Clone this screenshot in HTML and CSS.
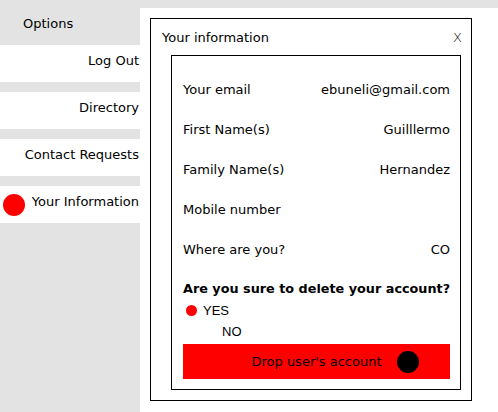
FILE: index.html
```html
<!DOCTYPE html>
<html>
<head>
<meta charset="utf-8">
<link rel="stylesheet" href="styles.css">
</head>
<body>
<div class="page">
  <nav class="sidebar">
    <div class="nav-head">Options</div>
    <div class="nav-item">Log Out</div>
    <div class="nav-item">Directory</div>
    <div class="nav-item">Contact Requests</div>
    <div class="nav-item active"><span class="dot"></span><span class="nav-label">Your Information</span></div>
  </nav>
  <main class="main">
    <section class="dialog">
      <div class="dialog-title"><span>Your information</span><span class="close">X</span></div>
      <div class="panel">
        <div class="row"><span>Your email</span><span>ebuneli@gmail.com</span></div>
        <div class="row"><span>First Name(s)</span><span>Guilllermo</span></div>
        <div class="row"><span>Family Name(s)</span><span>Hernandez</span></div>
        <div class="row"><span>Mobile number</span><span></span></div>
        <div class="row"><span>Where are you?</span><span>CO</span></div>
        <div class="question">Are you sure to delete your account?</div>
        <div class="option yes"><span class="radio"></span>YES</div>
        <div class="option no">NO</div>
        <div class="drop"><span class="drop-label">Drop user's account<span class="drop-dot"></span></span></div>
      </div>
    </section>
  </main>
</div>
</body>
</html>
```
FILE: styles.css
```css
* { box-sizing: border-box; }
html, body { margin: 0; padding: 0; }
body {
  background: #e3e3e3;
  font-family: "DejaVu Sans", sans-serif;
  font-size: 13px;
  color: #000;
  width: 498px;
  height: 412px;
  overflow: hidden;
}
.page { display: flex; height: 412px; }
.sidebar { width: 140px; flex: none; display: flex; flex-direction: column; gap: 10px; }
.nav-head { height: 45px; flex: none; display: flex; align-items: center; padding-left: 23px; padding-top: 2px; margin-bottom: -10px; }
.nav-item { height: 37px; flex: none; background: #fff; display: flex; align-items: center; justify-content: flex-end; padding-right: 1px; padding-bottom: 7px; }
.nav-item.active { justify-content: space-between; padding-left: 3px; padding-bottom: 0; }
.nav-label { padding-bottom: 7px; }
.dot { width: 22px; height: 22px; border-radius: 50%; background: #ff0000; }
.main { flex: 1; margin-top: 8px; background: #fff; padding: 10px 0 0 10px; }
.dialog { width: 322px; height: 383px; border: 1px solid #000; display: flex; flex-direction: column; }
.dialog-title { height: 36px; flex: none; display: flex; align-items: center; justify-content: space-between; padding: 0 9px 0 11px; }
.close { font-size: 13px; font-weight: 200; }
.panel { flex: none; margin: 0 10px 0 20px; border: 1px solid #000; padding: 13px 10px 10px 11px; display: flex; flex-direction: column; }
.row { height: 40px; flex: none; display: flex; align-items: center; justify-content: space-between; }
.question { font-weight: bold; font-size: 12.8px; white-space: nowrap; margin-top: 10px; line-height: 20px; }
.option { font-family: "Liberation Sans", Arial, sans-serif; font-size: 13px; line-height: 21px; display: flex; align-items: center; }
.yes { padding-left: 3px; padding-top: 1px; }
.radio { width: 11px; height: 11px; border-radius: 50%; background: #ff0000; margin-right: 6px; }
.no { padding-left: 39px; }
.drop { margin-top: 2px; height: 35px; flex: none; background: #ff0000; display: flex; align-items: center; justify-content: center; }
.drop-label { position: relative; }
.drop-dot { position: absolute; left: calc(100% + 15px); top: 50%; width: 22px; height: 22px; margin-top: -11px; border-radius: 50%; background: #000; }
```
